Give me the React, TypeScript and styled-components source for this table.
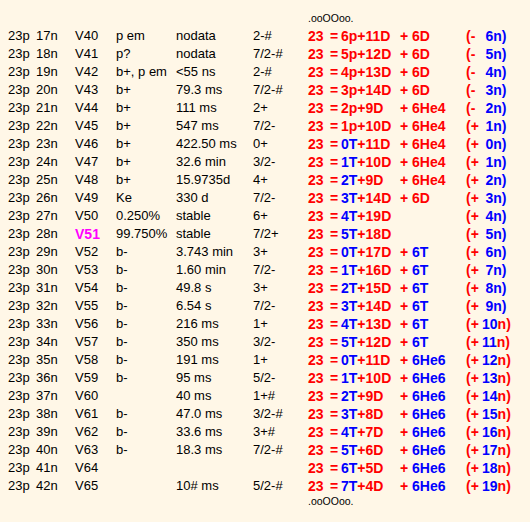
import React from "react";
import styled, { createGlobalStyle } from "styled-components";

const GlobalStyle = createGlobalStyle`
  html, body {
    margin: 0;
    padding: 0;
    background: #fff7e7;
  }
  body {
    font-family: "Liberation Sans", Arial, sans-serif;
    color: #000;
  }
`;

const RED = "#ff0000";
const BLUE = "#0000ff";

const Page = styled.div`
  width: 530px;
  min-height: 522px;
  box-sizing: border-box;
  padding: 12px 0 0 8px;
  background: #fff7e7;
`;

const Table = styled.div`
  display: flex;
  flex-direction: column;
`;

const cols = "28px 39px 41px 60px 77px 55px 22px 11px 59px 66px 16px auto";

const Row = styled.div`
  display: grid;
  grid-template-columns: ${cols};
  height: 18px;
  line-height: 18px;
  font-size: 13px;
  white-space: nowrap;
`;

const MarkerRow = styled.div<{ $gap?: number }>`
  display: grid;
  grid-template-columns: ${cols};
  height: 12px;
  line-height: 12px;
  font-size: 10.5px;
  margin-bottom: ${(p) => p.$gap ?? 0}px;
`;

const Marker = styled.span`
  grid-column: 7 / span 6;
`;

const Cell = styled.span<{ $magenta?: boolean }>`
  color: ${(p) => (p.$magenta ? "#ff00ff" : "#000")};
  font-weight: ${(p) => (p.$magenta ? 700 : 400)};
  font-size: ${(p) => (p.$magenta ? 14 : 13)}px;
`;

const Bold = styled.span<{ $color: string; $pad?: boolean }>`
  font-weight: 700;
  font-size: 14px;
  color: ${(p) => p.$color};
  padding-left: ${(p) => (p.$pad ? 3.5 : 0)}px;
`;

const Part = styled.span<{ $color: string }>`
  color: ${(p) => p.$color};
`;

type Data = {
  n: number;
  v: number;
  decay: string;
  half: string;
  spin: string;
  lead: number;
  kind: "p" | "T";
  d: number;
  tail: string;
  sign: "-" | "+";
  count: number;
};

const rows: Data[] = [
  { n: 17, v: 40, decay: "p em", half: "nodata", spin: "2-#", lead: 6, kind: "p", d: 11, tail: "6D", sign: "-", count: 6 },
  { n: 18, v: 41, decay: "p?", half: "nodata", spin: "7/2-#", lead: 5, kind: "p", d: 12, tail: "6D", sign: "-", count: 5 },
  { n: 19, v: 42, decay: "b+, p em", half: "<55 ns", spin: "2-#", lead: 4, kind: "p", d: 13, tail: "6D", sign: "-", count: 4 },
  { n: 20, v: 43, decay: "b+", half: "79.3 ms", spin: "7/2-#", lead: 3, kind: "p", d: 14, tail: "6D", sign: "-", count: 3 },
  { n: 21, v: 44, decay: "b+", half: "111 ms", spin: "2+", lead: 2, kind: "p", d: 9, tail: "6He4", sign: "-", count: 2 },
  { n: 22, v: 45, decay: "b+", half: "547 ms", spin: "7/2-", lead: 1, kind: "p", d: 10, tail: "6He4", sign: "+", count: 1 },
  { n: 23, v: 46, decay: "b+", half: "422.50 ms", spin: "0+", lead: 0, kind: "T", d: 11, tail: "6He4", sign: "+", count: 0 },
  { n: 24, v: 47, decay: "b+", half: "32.6 min", spin: "3/2-", lead: 1, kind: "T", d: 10, tail: "6He4", sign: "+", count: 1 },
  { n: 25, v: 48, decay: "b+", half: "15.9735d", spin: "4+", lead: 2, kind: "T", d: 9, tail: "6He4", sign: "+", count: 2 },
  { n: 26, v: 49, decay: "Ke", half: "330 d", spin: "7/2-", lead: 3, kind: "T", d: 14, tail: "6D", sign: "+", count: 3 },
  { n: 27, v: 50, decay: "0.250%", half: "stable", spin: "6+", lead: 4, kind: "T", d: 19, tail: "", sign: "+", count: 4 },
  { n: 28, v: 51, decay: "99.750%", half: "stable", spin: "7/2+", lead: 5, kind: "T", d: 18, tail: "", sign: "+", count: 5 },
  { n: 29, v: 52, decay: "b-", half: "3.743 min", spin: "3+", lead: 0, kind: "T", d: 17, tail: "6T", sign: "+", count: 6 },
  { n: 30, v: 53, decay: "b-", half: "1.60 min", spin: "7/2-", lead: 1, kind: "T", d: 16, tail: "6T", sign: "+", count: 7 },
  { n: 31, v: 54, decay: "b-", half: "49.8 s", spin: "3+", lead: 2, kind: "T", d: 15, tail: "6T", sign: "+", count: 8 },
  { n: 32, v: 55, decay: "b-", half: "6.54 s", spin: "7/2-", lead: 3, kind: "T", d: 14, tail: "6T", sign: "+", count: 9 },
  { n: 33, v: 56, decay: "b-", half: "216 ms", spin: "1+", lead: 4, kind: "T", d: 13, tail: "6T", sign: "+", count: 10 },
  { n: 34, v: 57, decay: "b-", half: "350 ms", spin: "3/2-", lead: 5, kind: "T", d: 12, tail: "6T", sign: "+", count: 11 },
  { n: 35, v: 58, decay: "b-", half: "191 ms", spin: "1+", lead: 0, kind: "T", d: 11, tail: "6He6", sign: "+", count: 12 },
  { n: 36, v: 59, decay: "b-", half: "95 ms", spin: "5/2-", lead: 1, kind: "T", d: 10, tail: "6He6", sign: "+", count: 13 },
  { n: 37, v: 60, decay: "", half: "40 ms", spin: "1+#", lead: 2, kind: "T", d: 9, tail: "6He6", sign: "+", count: 14 },
  { n: 38, v: 61, decay: "b-", half: "47.0 ms", spin: "3/2-#", lead: 3, kind: "T", d: 8, tail: "6He6", sign: "+", count: 15 },
  { n: 39, v: 62, decay: "b-", half: "33.6 ms", spin: "3+#", lead: 4, kind: "T", d: 7, tail: "6He6", sign: "+", count: 16 },
  { n: 40, v: 63, decay: "b-", half: "18.3 ms", spin: "7/2-#", lead: 5, kind: "T", d: 6, tail: "6He6", sign: "+", count: 17 },
  { n: 41, v: 64, decay: "", half: "", spin: "", lead: 6, kind: "T", d: 5, tail: "6He6", sign: "+", count: 18 },
  { n: 42, v: 65, decay: "", half: "10# ms", spin: "5/2-#", lead: 7, kind: "T", d: 4, tail: "6He6", sign: "+", count: 19 },
];

function tailColor(tail: string) {
  return tail === "6T" || tail === "6He6" ? BLUE : RED;
}

function FormulaRow({ r }: { r: Data }) {
  const isT = r.kind === "T";
  return (
    <Row>
      <Cell>23p</Cell>
      <Cell>{r.n}n</Cell>
      <Cell $magenta={r.v === 51}>V{r.v}</Cell>
      <Cell>{r.decay}</Cell>
      <Cell>{r.half}</Cell>
      <Cell>{r.spin}</Cell>
      <Bold $color={RED}>23</Bold>
      <Bold $color={RED}>=</Bold>
      <Bold $color={RED}>
        <Part $color={isT ? BLUE : RED}>
          {r.lead}
          {r.kind}
        </Part>
        +{r.d}D
      </Bold>
      <Bold $color={RED}>
        {r.tail && (
          <>
            {"+ "}
            <Part $color={tailColor(r.tail)}>{r.tail}</Part>
          </>
        )}
      </Bold>
      <Bold $color={RED}>({r.sign}</Bold>
      {r.count < 10 ? (
        <Bold $color={BLUE} $pad>
          {r.count}n)
        </Bold>
      ) : (
        <Bold $color={BLUE}>
          {r.count}
          <Part $color={RED}>n)</Part>
        </Bold>
      )}
    </Row>
  );
}

export default function App() {
  return (
    <>
      <GlobalStyle />
      <Page>
        <Table>
          <MarkerRow $gap={3}>
            <Marker>.ooOOoo.</Marker>
          </MarkerRow>
          {rows.map((r) => (
            <FormulaRow key={r.n} r={r} />
          ))}
          <MarkerRow>
            <Marker>.ooOOoo.</Marker>
          </MarkerRow>
        </Table>
      </Page>
    </>
  );
}
